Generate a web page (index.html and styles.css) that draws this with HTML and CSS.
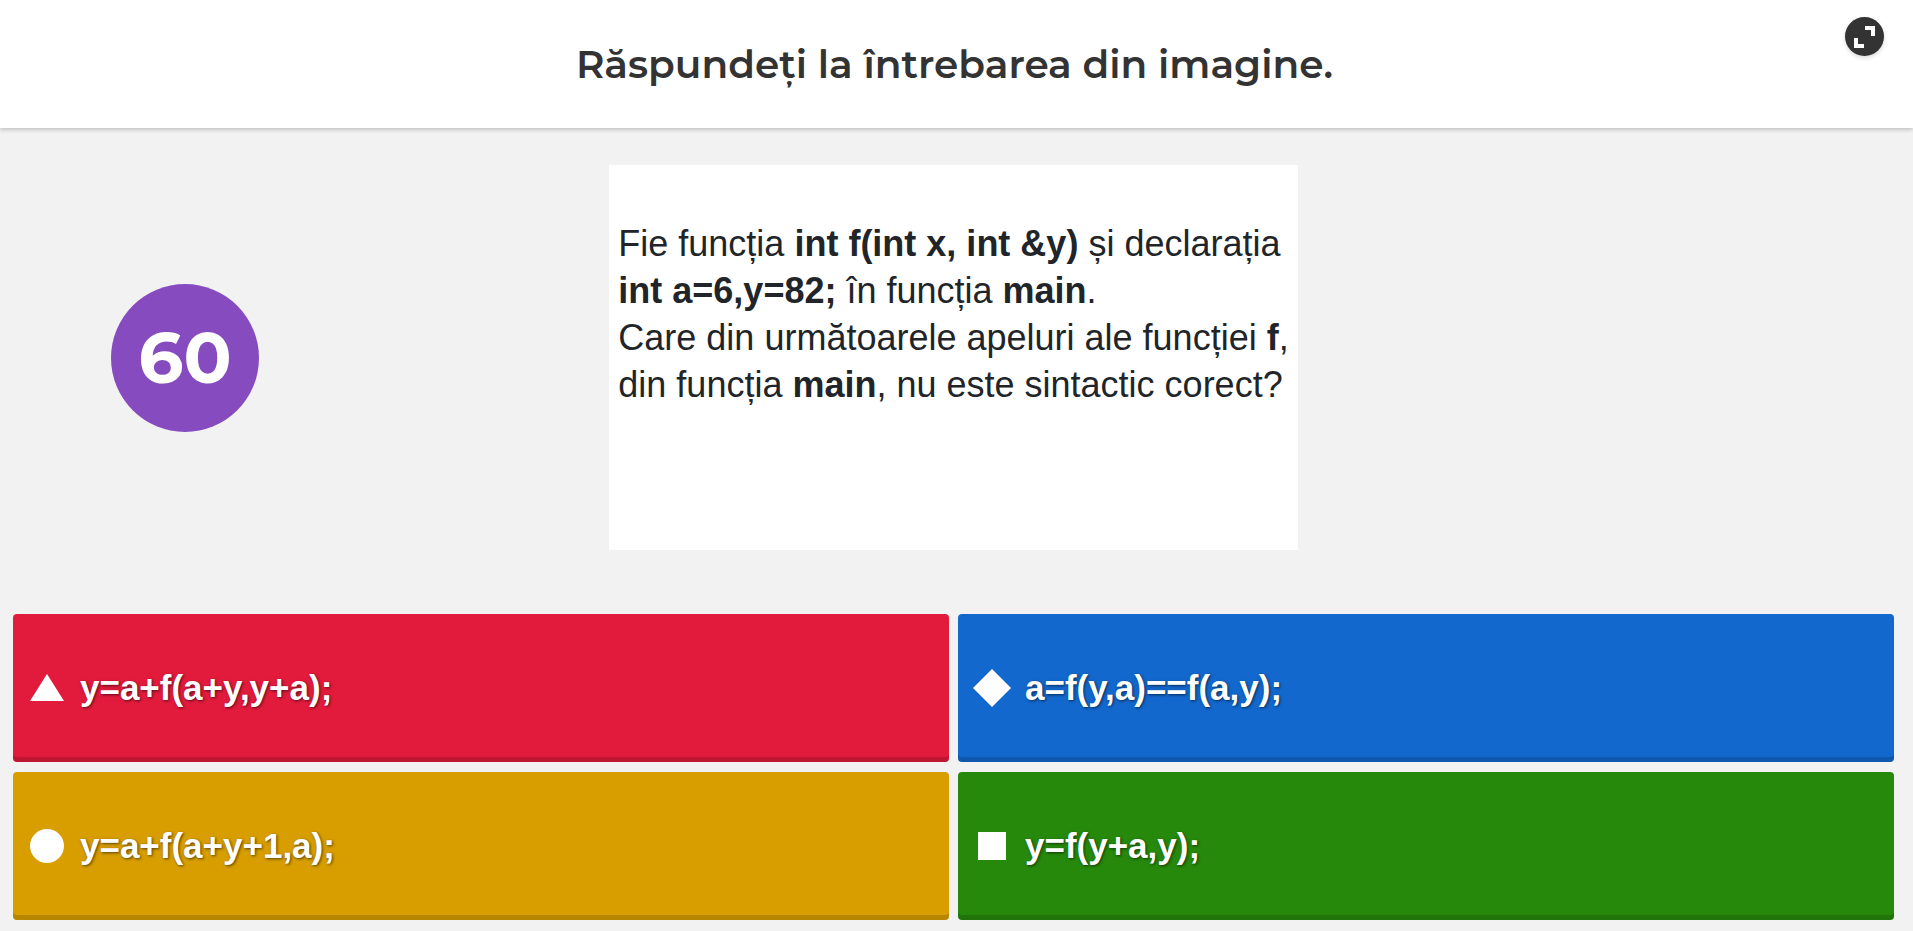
FILE: index.html
```html
<!DOCTYPE html>
<html lang="ro">
<head>
<meta charset="utf-8">
<meta name="viewport" content="width=device-width, initial-scale=1">
<title>Quiz</title>
<link rel="stylesheet" href="styles.css">
</head>
<body>
<header class="header">
  <h1 class="title">Răspundeți la întrebarea din imagine.</h1>
  <button class="fullscreen" type="button" aria-label="Ecran complet">
    <svg viewBox="0 0 39 39" aria-hidden="true"><path d="M20 9h10v10h-4v-6h-6zM9 21h4v6h6v4H9z"/></svg>
  </button>
</header>
<main class="main">
  <section class="stage">
    <div class="timer" role="timer">60</div>
    <div class="question">
      <p>Fie funcția <b>int f(int x, int &amp;y)</b> și declarația<br><b>int a=6,y=82;</b> în funcția <b>main</b>.</p>
      <p>Care din următoarele apeluri ale funcției <b>f</b>,<br>din funcția <b>main</b>, nu este sintactic corect?</p>
    </div>
  </section>
  <section class="answers">
    <button class="answer red" type="button">
      <svg class="shape" viewBox="0 0 38 38" aria-hidden="true"><path d="M19 5l17 27H2z"/></svg>
      <span>y=a+f(a+y,y+a);</span>
    </button>
    <button class="answer blue" type="button">
      <svg class="shape" viewBox="0 0 38 38" aria-hidden="true"><path d="M19 0l19 19-19 19L0 19z"/></svg>
      <span>a=f(y,a)==f(a,y);</span>
    </button>
    <button class="answer yellow" type="button">
      <svg class="shape" viewBox="0 0 38 38" aria-hidden="true"><circle cx="19" cy="19" r="17"/></svg>
      <span>y=a+f(a+y+1,a);</span>
    </button>
    <button class="answer green" type="button">
      <svg class="shape" viewBox="0 0 38 38" aria-hidden="true"><path d="M5 5h28v28H5z"/></svg>
      <span>y=f(y+a,y);</span>
    </button>
  </section>
</main>
</body>
</html>
```
FILE: styles.css
```css
* {
  box-sizing: border-box;
}

body {
  margin: 0;
  min-height: 100vh;
  display: flex;
  flex-direction: column;
  background: #f2f2f2;
  color: #333;
  font-family: Montserrat, Inter, sans-serif;
}

.header {
  position: relative;
  padding: 38px 64px 38px 60px;
  background: #fff;
  box-shadow: 0 2px 4px rgba(0, 0, 0, 0.2);
  text-align: center;
}

.title {
  margin: 0;
  font-size: 39px;
  line-height: 52px;
  font-weight: 600;
}

.fullscreen {
  position: absolute;
  top: 17px;
  right: 29px;
  width: 39px;
  height: 39px;
  padding: 0;
  border: 0;
  border-radius: 50%;
  background: #333;
  box-shadow: 0 2px 4px rgba(0, 0, 0, 0.15);
  cursor: pointer;
}

.fullscreen svg {
  display: block;
  fill: #fff;
}

.main {
  flex: 1;
  display: flex;
  flex-direction: column;
}

.stage {
  flex: 1;
  display: grid;
  grid-template-columns: 1fr auto 1fr;
  align-items: center;
  padding: 37px 6px 64px 0;
}

.timer {
  display: flex;
  align-items: center;
  justify-content: center;
  width: 148px;
  height: 148px;
  margin-left: 111px;
  border-radius: 50%;
  background: #864cbf;
  color: #fff;
  font-size: 71px;
  font-weight: 700;
}

.question {
  padding: 55px 9px 142px;
  background: #fff;
  color: #212529;
  font-family: Arial, "Liberation Sans", sans-serif;
  font-size: 36px;
  line-height: 47px;
}

.question p {
  margin: 0;
}

.answers {
  display: grid;
  grid-template-columns: 1fr 1fr;
  gap: 10px 9px;
  padding: 0 19px 11px 13px;
}

.answer {
  display: flex;
  align-items: center;
  gap: 14px;
  height: 148px;
  padding: 0 15px;
  border: 0;
  border-radius: 4px;
  box-shadow: inset 0 -5px rgba(0, 0, 0, 0.15);
  color: #fff;
  font: bold 35px/44px Arial, "Liberation Sans", sans-serif;
  text-align: left;
  text-shadow: 1px 1px 3px rgba(0, 0, 0, 0.6);
  cursor: pointer;
}

.shape {
  flex: none;
  width: 38px;
  height: 38px;
  fill: #fff;
}

.red {
  background: #e21b3c;
}

.blue {
  background: #1368ce;
}

.yellow {
  background: #d89e00;
}

.green {
  background: #26890c;
}
```
